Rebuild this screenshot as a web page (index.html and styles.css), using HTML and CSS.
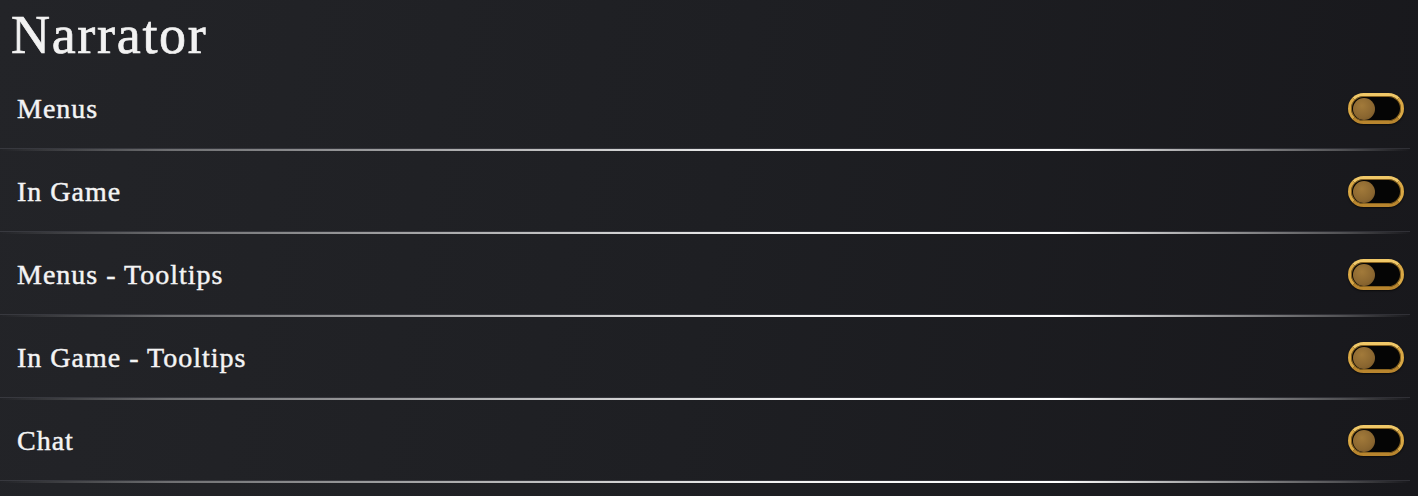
FILE: index.html
```html
<!DOCTYPE html>
<html lang="en">
  <head>
    <meta charset="UTF-8" />
    <meta name="viewport" content="width=device-width, initial-scale=1.0" />
    <title>Narrator</title>
    <link rel="stylesheet" href="styles.css">
  </head>
  <body>
    <div class="settings">
      <h1>Narrator</h1>

      <div class="setting-row">
        <span class="label">Menus</span>
        <button class="toggle" aria-label="Menus"><span class="knob"></span></button>
      </div>
      <div class="divider"></div>

      <div class="setting-row">
        <span class="label">In Game</span>
        <button class="toggle" aria-label="In Game"><span class="knob"></span></button>
      </div>
      <div class="divider"></div>

      <div class="setting-row">
        <span class="label">Menus - Tooltips</span>
        <button class="toggle" aria-label="Menus - Tooltips"><span class="knob"></span></button>
      </div>
      <div class="divider"></div>

      <div class="setting-row">
        <span class="label">In Game - Tooltips</span>
        <button class="toggle" aria-label="In Game - Tooltips"><span class="knob"></span></button>
      </div>
      <div class="divider"></div>

      <div class="setting-row">
        <span class="label">Chat</span>
        <button class="toggle" aria-label="Chat"><span class="knob"></span></button>
      </div>
      <div class="divider"></div>
    </div>
  </body>
</html>
```

FILE: styles.css
```css
body {
  margin: 0;
  height: 496px;
  overflow: hidden;
  font-family: "Liberation Serif", "DejaVu Serif", serif;
  color: #f4f4f4;
  background: linear-gradient(100deg, #232428 0%, #1e1f23 50%, #18181c 100%);
}

.settings h1 {
  margin: 0;
  height: 68px;
  padding-left: 11px;
  font-size: 54px;
  font-weight: normal;
  line-height: 70px;
  letter-spacing: 1.7px;
  color: #f2f2f2;
  -webkit-text-stroke: 0.7px #f2f2f2;
}

.setting-row {
  height: 81px;
  display: flex;
  align-items: center;
  justify-content: space-between;
  padding: 0 14px 0 17px;
}

.label {
  font-size: 28px;
  line-height: 32px;
  letter-spacing: 1px;
  -webkit-text-stroke: 0.45px #f4f4f4;
}

.divider {
  height: 2px;
  margin-right: 8px;
  background: linear-gradient(
    to right,
    rgba(255, 255, 255, 0) 0%,
    rgba(255, 255, 255, 0.35) 12%,
    rgba(255, 255, 255, 0.95) 55%,
    #ffffff 75%,
    rgba(255, 255, 255, 0.6) 85%,
    rgba(255, 255, 255, 0.25) 95%,
    rgba(255, 255, 255, 0) 100%
  );
  box-shadow: 0 -1px 0 rgba(120, 120, 130, 0.25);
}

.toggle {
  width: 56px;
  height: 31px;
  padding: 0;
  border: 3px solid #d9a845;
  border-radius: 16px;
  background: #050505;
  display: flex;
  align-items: center;
  cursor: pointer;
  box-shadow: inset 0 0 0 1px #8a6420, 0 1px 2px rgba(0, 0, 0, 0.6);
  border-top-color: #f0c868;
  border-bottom-color: #b8852e;
}

.knob {
  width: 22px;
  height: 22px;
  margin-left: 2px;
  border-radius: 50%;
  background: radial-gradient(circle at 40% 35%, #a27a3a 0%, #8a6630 60%, #6e5026 100%);
}
```
